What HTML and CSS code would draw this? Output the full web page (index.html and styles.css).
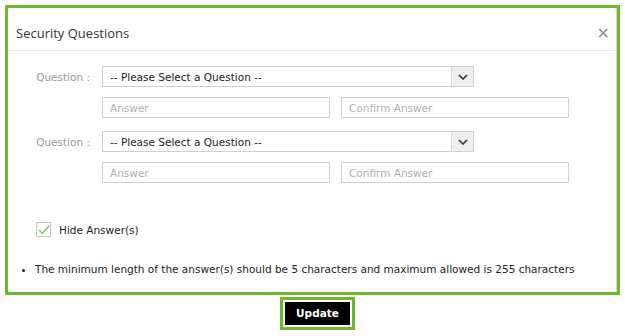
FILE: index.html
```html
<!DOCTYPE html>
<html lang="en">
<head>
    <meta charset="UTF-8">
    <meta name="viewport" content="width=device-width, initial-scale=1.0">
    <title>Security Questions</title>
    <link rel="stylesheet" href="styles.css">
</head>
<body>
    <div class="modal">
        <div class="modal-header">
            <h4>Security Questions</h4>
            <span class="close">&times;</span>
        </div>
        <div class="modal-body">
            <div class="question-group">
                <div class="row">
                    <label>Question :</label>
                    <div class="select">
                        <span>-- Please Select a Question --</span>
                        <span class="arrow">
                            <svg width="10" height="6" viewBox="0 0 10 6"><path d="M1 1l4 4 4-4" fill="none" stroke="#333" stroke-width="1.6"/></svg>
                        </span>
                    </div>
                </div>
                <div class="row answers">
                    <input type="text" placeholder="Answer">
                    <input type="text" placeholder="Confirm Answer">
                </div>
            </div>
            <div class="question-group">
                <div class="row">
                    <label>Question :</label>
                    <div class="select">
                        <span>-- Please Select a Question --</span>
                        <span class="arrow">
                            <svg width="10" height="6" viewBox="0 0 10 6"><path d="M1 1l4 4 4-4" fill="none" stroke="#333" stroke-width="1.6"/></svg>
                        </span>
                    </div>
                </div>
                <div class="row answers">
                    <input type="text" placeholder="Answer">
                    <input type="text" placeholder="Confirm Answer">
                </div>
            </div>
            <div class="hide-answers">
                <span class="checkbox">
                    <svg width="12" height="10" viewBox="0 0 12 10"><path d="M1 5l3.5 3.5L11 1" fill="none" stroke="#7cc04b" stroke-width="1.3"/></svg>
                </span>
                Hide Answer(s)
            </div>
            <ul class="notes">
                <li>The minimum length of the answer(s) should be 5 characters and maximum allowed is 255 characters</li>
            </ul>
        </div>
    </div>
    <div class="actions">
        <button class="update-btn"><span>Update</span></button>
    </div>
</body>
</html>
```

FILE: styles.css
```css
body {
    margin: 0;
    padding: 5px 0 0 5px;
    background: white;
    font-family: "DejaVu Sans", Verdana, sans-serif;
    font-size: 10.5px;
    color: #222;
}
.modal {
    width: 609px;
    height: 284px;
    border: 3px solid #72b62b;
    background: white;
    box-shadow: inset -1px 0 0 #d8d8d8;
}
.modal-header {
    display: flex;
    justify-content: space-between;
    align-items: flex-end;
    box-sizing: border-box;
    height: 43px;
    padding: 0 7px 8px 8px;
    border-bottom: 1px solid #e8e8e8;
}
.modal-header h4 {
    margin: 0;
    font-family: "Open Sans", "Noto Sans", sans-serif;
    font-weight: normal;
    font-size: 13px;
    color: #333;
}
.close {
    font-family: "DejaVu Sans", sans-serif;
    font-size: 16px;
    color: #888;
    line-height: 1;
    padding-bottom: 1px;
}
.modal-body {
    padding-top: 15px;
}
.question-group {
    margin-bottom: 13px;
}
.row {
    display: flex;
    align-items: center;
}
.row label {
    width: 82px;
    padding-right: 12px;
    text-align: right;
    color: #9a9a9a;
}
.select {
    box-sizing: border-box;
    width: 372px;
    height: 21px;
    border: 1px solid #d0d0d0;
    display: flex;
    align-items: center;
    justify-content: space-between;
    color: #222;
}
.select span:first-child {
    padding-left: 7px;
}
.arrow {
    width: 21px;
    height: 19px;
    background: #efefef;
    border-left: 1px solid #d8d8d8;
    display: flex;
    align-items: center;
    justify-content: center;
}
.answers {
    margin-top: 10px;
    padding-left: 94px;
    gap: 11px;
}
.answers input {
    box-sizing: border-box;
    width: 228px;
    height: 21px;
    border: 1px solid #d3d3d3;
    padding: 0 7px;
    font-family: "DejaVu Sans", Verdana, sans-serif;
    font-size: 10.5px;
    outline: none;
}
.answers input::placeholder {
    color: #b0b0b0;
}
.hide-answers {
    display: flex;
    align-items: center;
    margin: 39px 0 0 28px;
    color: #222;
}
.checkbox {
    box-sizing: border-box;
    width: 15px;
    height: 15px;
    border: 1px solid #c8c8c8;
    margin-right: 8px;
    display: flex;
    align-items: center;
    justify-content: center;
}
.notes {
    margin: 25px 0 0 0;
    padding-left: 27px;
}
.notes li {
    line-height: 14px;
}
.actions {
    padding-left: 275px;
    padding-top: 2px;
}
.update-btn {
    border: 3px solid #72b62b;
    padding: 2px;
    background: white;
    cursor: pointer;
}
.update-btn span {
    display: block;
    width: 65px;
    height: 23px;
    line-height: 23px;
    background: black;
    font-family: "DejaVu Sans", Verdana, sans-serif;
    font-weight: bold;
    font-size: 10.5px;
    color: white;
}
```
